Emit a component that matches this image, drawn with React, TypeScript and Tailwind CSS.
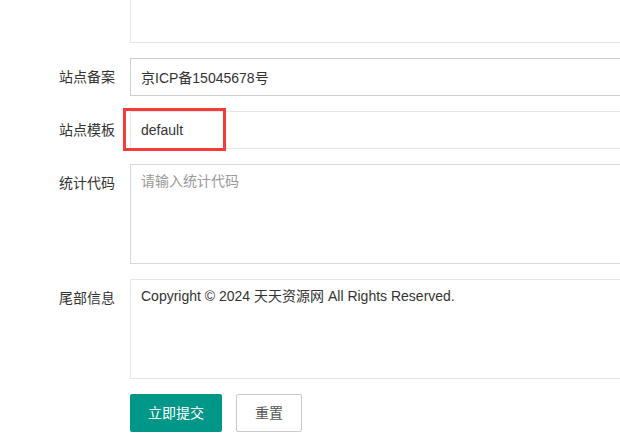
import React from 'react';

const font = { fontFamily: '"Liberation Sans", Arial, "Noto Sans CJK SC", sans-serif' };

const Label: React.FC<{ text: string }> = ({ text }) => (
  <label className="w-[110px] shrink-0 px-[15px] py-[9px] text-right text-[14px] leading-[20px] text-[#333]">{text}</label>
);

const App: React.FC = () => {
  return (
    <div className="w-[620px] h-[444px] overflow-hidden bg-white" style={font}>
      <div className="w-[760px] pl-[20px] -mt-[57px]">
        {/* previous item, scrolled mostly out of view */}
        <div className="flex mb-[15px]">
          <Label text="" />
          <div className="flex-1 h-[100px] border border-[#e6e6e6] bg-white" />
        </div>

        <div className="flex mb-[15px]">
          <Label text="站点备案" />
          <input
            className="flex-1 h-[38px] border border-[#cfcfcf] px-[10px] text-[14px] text-[#333] outline-none"
            defaultValue="京ICP备15045678号"
            style={font}
          />
        </div>

        <div className="flex mb-[15px]">
          <Label text="站点模板" />
          <div className="relative flex-1">
            <input
              className="w-full h-[38px] border border-[#e6e6e6] px-[10px] text-[14px] text-[#333] outline-none"
              defaultValue="default"
              style={font}
            />
            <div className="absolute left-[-7px] top-[-3px] w-[103px] h-[43px] border-[3px] border-[#f63b3b] pointer-events-none" />
          </div>
        </div>

        <div className="flex mb-[15px]">
          <Label text="统计代码" />
          <textarea
            className="flex-1 h-[100px] resize-none border border-[#d9d9d9] px-[10px] py-[6px] text-[14px] leading-[20px] text-[#333] placeholder:text-[#999] outline-none"
            placeholder="请输入统计代码"
            style={font}
          />
        </div>

        <div className="flex mb-[15px]">
          <Label text="尾部信息" />
          <textarea
            className="flex-1 h-[100px] resize-none border border-[#e6e6e6] px-[10px] py-[6px] text-[14px] leading-[20px] text-[#333] outline-none"
            defaultValue="Copyright © 2024 天天资源网 All Rights Reserved."
            style={font}
          />
        </div>

        <div className="flex pl-[110px] gap-[14px]">
          <button className="h-[38px] px-[18px] rounded-[2px] bg-[#009688] text-white text-[14px]">立即提交</button>
          <button className="h-[38px] px-[18px] rounded-[2px] border border-[#c9c9c9] bg-white text-[#555] text-[14px]">重置</button>
        </div>
      </div>
    </div>
  );
};

export default App;
